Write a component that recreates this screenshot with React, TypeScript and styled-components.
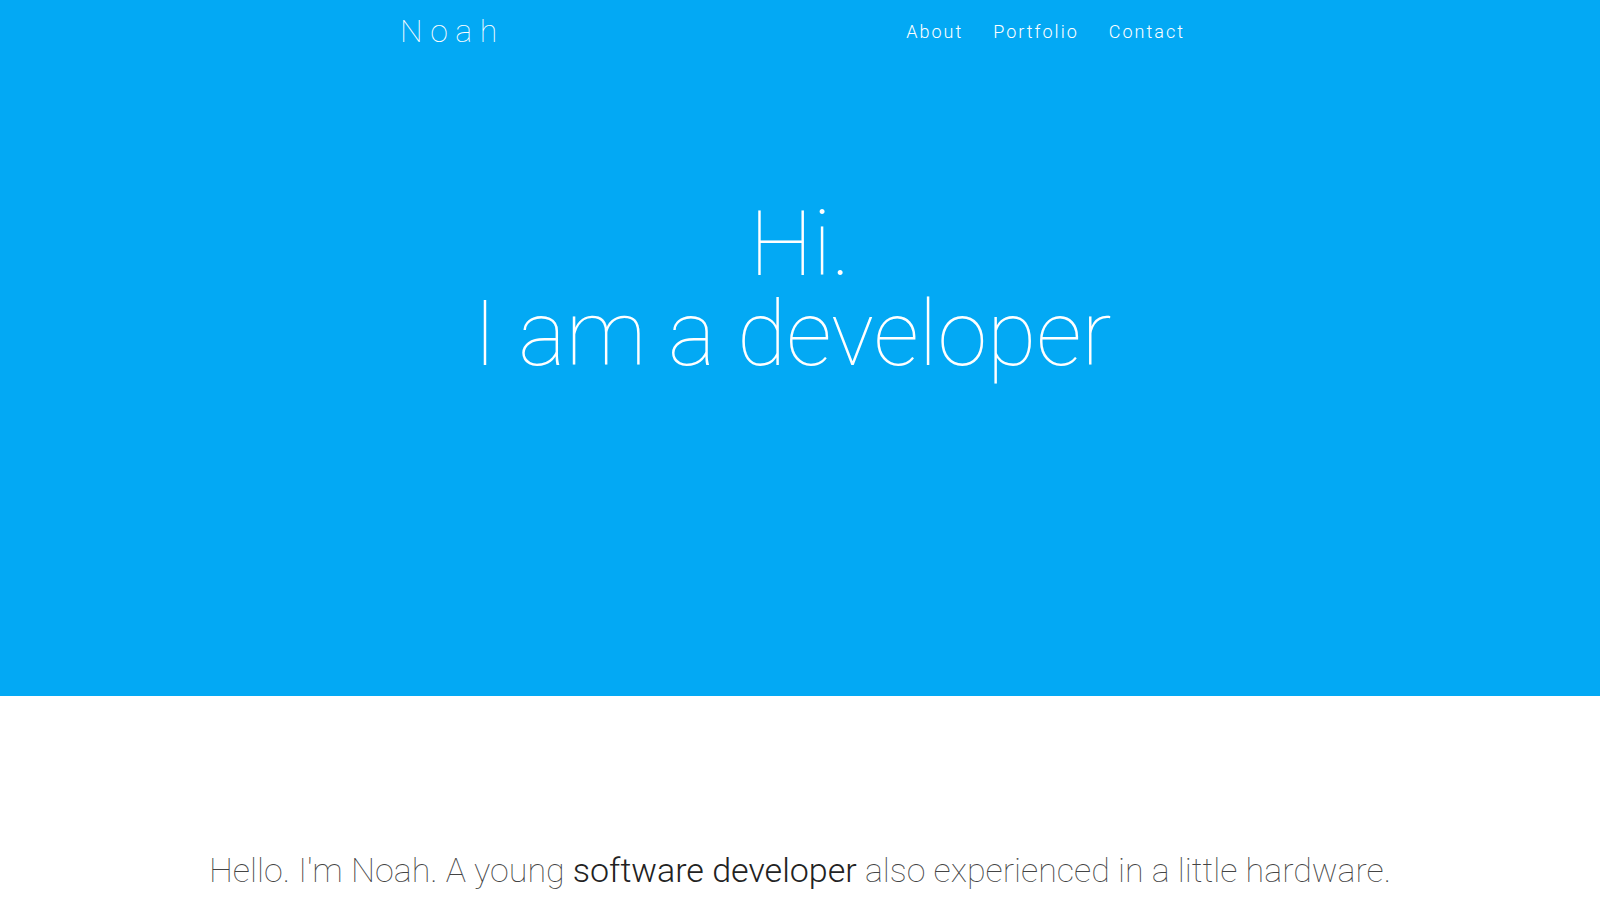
import React from "react";
import styled, { createGlobalStyle } from "styled-components";

const GlobalStyle = createGlobalStyle`
    html, body {
        margin: 0;
        padding: 0;
        background: #fff;
        font-family: Roboto, "Liberation Sans", sans-serif;
    }
`;

const Hero = styled.section`
    background: #03a9f4;
    height: 696px;
    color: #fff;
`;

const NavBar = styled.header`
    width: 800px;
    height: 62px;
    margin: 0 auto;
    display: flex;
    align-items: center;
    justify-content: space-between;
`;

const Brand = styled.a`
    font-size: 32px;
    font-weight: 100;
    letter-spacing: 7.5px;
    color: #fff;
    text-decoration: none;
`;

const NavList = styled.nav`
    display: flex;
`;

const NavLink = styled.a`
    font-size: 18px;
    font-weight: 300;
    letter-spacing: 2px;
    color: #fff;
    padding: 0 15px;
    text-decoration: none;
`;

const Title = styled.h1`
    margin: 138px 0 0;
    text-align: center;
    font-size: 90px;
    line-height: 90px;
    font-weight: 100;
`;

// typing cursor, blinked off in the screenshot
const Cursor = styled.span`
    display: inline-block;
    width: 15px;
    opacity: 0;
`;

const About = styled.section`
    padding-top: 150px;
    text-align: center;
`;

const Intro = styled.p`
    margin: 0;
    font-size: 34px;
    line-height: 48px;
    font-weight: 100;
    color: #444;
`;

const Strong = styled.span`
    font-weight: 300;
    color: #222;
`;

export default function App() {
    return (
        <>
            <GlobalStyle />
            <Hero>
                <NavBar>
                    <Brand href="#">Noah</Brand>
                    <NavList>
                        <NavLink href="#">About</NavLink>
                        <NavLink href="#">Portfolio</NavLink>
                        <NavLink href="#">Contact</NavLink>
                    </NavList>
                </NavBar>
                <Title>
                    Hi.
                    <br />
                    I am a developer<Cursor>|</Cursor>
                </Title>
            </Hero>
            <About>
                <Intro>
                    Hello. I'm Noah. A young <Strong>software developer</Strong> also experienced in a little hardware.
                </Intro>
            </About>
        </>
    );
}
